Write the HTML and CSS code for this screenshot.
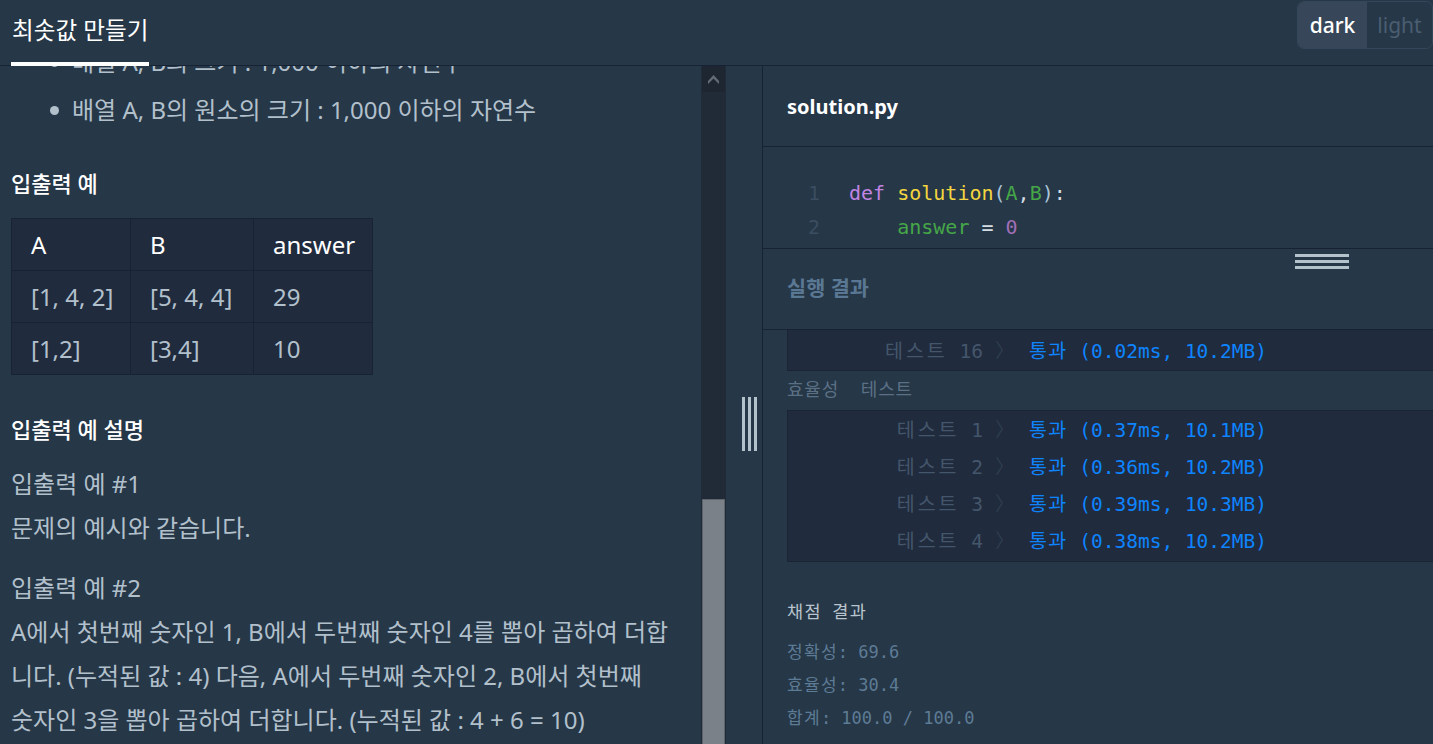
FILE: index.html
```html
<!DOCTYPE html>
<html lang="ko">
<head>
<meta charset="utf-8">
<title>최솟값 만들기</title>
<link rel="stylesheet" href="styles.css">
</head>
<body>
<div class="app">
  <header class="topbar">
    <div class="tab">최솟값 만들기</div>
    <div class="theme-toggle">
      <span class="mode mode-on">dark</span>
      <span class="mode mode-off">light</span>
    </div>
  </header>
  <main class="workspace">
    <section class="problem">
      <div class="problem-view">
        <div class="problem-body">
          <ul class="limits">
            <li>배열 A, B의 크기 : 1,000 이하의 자연수</li>
            <li>배열 A, B의 원소의 크기 : 1,000 이하의 자연수</li>
          </ul>
          <h5 class="sec-title first">입출력 예</h5>
          <table class="io-table">
            <colgroup><col class="c1"><col class="c2"><col class="c3"></colgroup>
            <thead>
              <tr><th>A</th><th>B</th><th>answer</th></tr>
            </thead>
            <tbody>
              <tr><td>[1, 4, 2]</td><td>[5, 4, 4]</td><td>29</td></tr>
              <tr><td>[1,2]</td><td>[3,4]</td><td>10</td></tr>
            </tbody>
          </table>
          <h5 class="sec-title second">입출력 예 설명</h5>
          <p class="para p1">입출력 예 #1<br>문제의 예시와 같습니다.</p>
          <p class="para p2">입출력 예 #2<br>A에서 첫번째 숫자인 1, B에서 두번째 숫자인 4를 뽑아 곱하여 더합<br>니다. (누적된 값 : 4) 다음, A에서 두번째 숫자인 2, B에서 첫번째<br>숫자인 3을 뽑아 곱하여 더합니다. (누적된 값 : 4 + 6 = 10)</p>
        </div>
      </div>
      <div class="scrollbar">
        <div class="sb-btn">
          <svg width="11" height="9" viewBox="0 0 11 9"><polygon points="0,6 5.5,0 11,6 11,9 5.5,3.5 0,9" fill="#646c76"/></svg>
        </div>
        <div class="sb-track"><div class="sb-thumb"></div></div>
      </div>
    </section>
    <div class="splitter">
      <div class="vgrip"><i></i><i></i><i></i></div>
    </div>
    <section class="editor">
      <div class="file-head">solution.py</div>
      <div class="code">
        <div class="code-line"><span class="ln">1</span><code><span class="kw">def</span> <span class="fn">solution</span><span class="pn">(</span><span class="arg">A</span>,<span class="arg">B</span><span class="pn">)</span>:</code></div>
        <div class="code-line"><span class="ln">2</span><code>    <span class="var">answer</span> = <span class="num">0</span></code></div>
      </div>
      <div class="run-head">
        <div class="hgrip"><i></i><i></i><i></i></div>
        <span class="run-title">실행 결과</span>
      </div>
      <div class="output">
        <div class="result-box first">
          <div class="t-row"><span class="t-name"><span class="ko-w">테스트</span> 16</span><span class="t-sep">〉</span><span class="t-res"><span class="ko">통과</span> (0.02ms, 10.2MB)</span></div>
        </div>
        <div class="t-group"><span class="ko">효율성</span>  <span class="ko">테스트</span></div>
        <div class="result-box">
          <div class="t-row"><span class="t-name"><span class="ko-w">테스트</span> 1</span><span class="t-sep">〉</span><span class="t-res"><span class="ko">통과</span> (0.37ms, 10.1MB)</span></div>
          <div class="t-row"><span class="t-name"><span class="ko-w">테스트</span> 2</span><span class="t-sep">〉</span><span class="t-res"><span class="ko">통과</span> (0.36ms, 10.2MB)</span></div>
          <div class="t-row"><span class="t-name"><span class="ko-w">테스트</span> 3</span><span class="t-sep">〉</span><span class="t-res"><span class="ko">통과</span> (0.39ms, 10.3MB)</span></div>
          <div class="t-row"><span class="t-name"><span class="ko-w">테스트</span> 4</span><span class="t-sep">〉</span><span class="t-res"><span class="ko">통과</span> (0.38ms, 10.2MB)</span></div>
        </div>
        <div class="grade">
          <div class="grade-title"><span class="ko">채점</span> <span class="ko">결과</span></div>
          <div class="grade-lines">
            <div class="grade-line"><span class="ko">정확성</span>: 69.6</div>
            <div class="grade-line"><span class="ko">효율성</span>: 30.4</div>
            <div class="grade-line"><span class="ko">합계</span>: 100.0 / 100.0</div>
          </div>
        </div>
      </div>
    </section>
  </main>
</div>
</body>
</html>
```
FILE: styles.css
```css
* { box-sizing: border-box; }
html, body { margin: 0; height: 100%; }
body {
  background: #263747;
  color: #b2c0cc;
  font-family: "Noto Sans", "Noto Sans CJK KR", sans-serif;
  overflow: hidden;
}
.app { width: 1433px; height: 744px; display: flex; flex-direction: column; }

/* top bar */
.topbar {
  height: 66px; flex: none; display: flex; align-items: flex-start;
  box-shadow: inset 0 -1px 0 #172334;
}
.tab {
  margin-left: 11px; height: 66px; padding: 0 1px;
  border-bottom: 4px solid #ffffff;
  color: #ffffff; font-size: 23.6px; line-height: 60px; white-space: nowrap;
}
.theme-toggle {
  margin-left: auto; margin-top: 1px; width: 136px; height: 48px;
  display: flex; border: 1px solid #34465a; border-radius: 7px; overflow: hidden;
  font-size: 21px;
}
.mode { display: flex; align-items: center; justify-content: center; }
.mode-on { width: 69px; background: #374759; color: #ffffff; font-weight: 500; }
.mode-off { flex: 1; color: #4b5e72; }

/* workspace */
.workspace { flex: 1; display: flex; min-height: 0; }
.problem { width: 726px; flex: none; display: flex; }
.problem-view { flex: 1; overflow: hidden; }
.problem-body { margin-top: -26px; padding-left: 11px; font-size: 24px; line-height: 44px; }
.limits { list-style: none; margin: 0; padding: 0 0 0 39px; }
.limits li { display: flex; align-items: center; white-space: nowrap; }
.limits li + li { margin-top: 4px; }
.limits li::before {
  content: ""; width: 9px; height: 9px; border-radius: 50%;
  background: #b2c0cc; margin-right: 13px; flex: none;
}
.sec-title { margin: 0; color: #ffffff; font-size: 22px; font-weight: 500; line-height: 30px; }
.sec-title.first { margin-top: 36px; margin-bottom: 20px; }
.sec-title.second { margin-top: 39px; }
.io-table {
  border-collapse: collapse; background: #202b3d; table-layout: fixed; width: 361px;
}
.io-table .c1 { width: 119px; }
.io-table .c2 { width: 123px; }
.io-table .c3 { width: 119px; }
.io-table th, .io-table td {
  border: 1px solid #172334; height: 52px; padding: 0 0 0 19px;
  text-align: left; font-weight: 400; line-height: 30px; white-space: nowrap;
}
.io-table th { color: #ffffff; }
.para { margin: 0; white-space: nowrap; }
.para.p1 { margin-top: 18px; }
.para.p2 { margin-top: 16px; }

.scrollbar { width: 25px; flex: none; background: #212b37; display: flex; flex-direction: column; padding: 0 1px; }
.sb-btn { height: 26px; background: #1e2731; display: flex; align-items: center; justify-content: center; }
.sb-track { flex: 1; display: flex; flex-direction: column; justify-content: flex-end; }
.sb-thumb { height: 245px; background: #7b8188; border: 1px solid #5d646c; border-bottom: 0; }

.splitter { width: 37px; flex: none; border-right: 1px solid #172334; padding: 331px 0 0 16px; }
.vgrip { display: flex; gap: 3px; height: 54px; }
.vgrip i { width: 3px; background: #b4c2cc; }

/* editor */
.editor { flex: 1; display: flex; flex-direction: column; min-width: 0; }
.file-head {
  height: 81px; flex: none; border-bottom: 1px solid #172334; padding-left: 24px;
  display: flex; align-items: center;
  color: #ffffff; font-size: 20px; font-weight: 700;
}
.code {
  height: 102px; flex: none; border-bottom: 1px solid #172334; padding-top: 29px;
  font-family: "DejaVu Sans Mono", monospace; font-size: 20px; line-height: 34px;
}
.code-line { display: flex; white-space: pre; }
.ln { width: 57px; text-align: right; color: #3b4d61; flex: none; }
.code-line code { font: inherit; margin-left: 29px; color: #d5dde4; }
.kw { color: #c285e3; }
.fn { color: #f3d63f; }
.pn { color: #a9c4d8; }
.arg { color: #45a747; }
.var { color: #45a747; }
.num { color: #a06fb6; }

.run-head {
  height: 81px; flex: none; border-bottom: 1px solid #172334; position: relative;
  padding: 0 0 5px 24px; display: flex; align-items: center;
}
.run-title { color: #5a7894; font-size: 20.8px; font-weight: 700; }
.hgrip { position: absolute; right: 84px; top: 5px; width: 54px; display: flex; flex-direction: column; gap: 3px; }
.hgrip i { height: 3px; background: #b4c2cc; }

.output {
  flex: 1; overflow: hidden; padding-left: 24px;
  font-family: "DejaVu Sans Mono", "Noto Sans CJK KR", monospace;
}
.ko { letter-spacing: 1.3px; }
.ko-w { letter-spacing: 3px; }
.result-box { background: #202b3d; border: 1px solid #1a2432; border-right: 0; padding: 1px 0 1px; }
.result-box.first { border-top: 0; padding-top: 3px; padding-bottom: 0; }
.t-row { display: flex; font-size: 19.5px; line-height: 37px; white-space: pre; }
.t-name { width: 195px; text-align: right; color: #44566b; flex: none; }
.t-sep { width: 46px; padding-left: 12px; color: #2e3d4e; flex: none; }
.t-res { color: #0e84ff; }
.t-group { font-size: 18px; line-height: 36px; color: #5b7085; white-space: pre; margin: 1px 0 2px; }
.t-group .ko { letter-spacing: 0.8px; }
.grade { margin-top: 34px; font-size: 17px; line-height: 33px; }
.grade-title { color: #b8c4ce; font-size: 17.5px; }
.grade-lines { margin-top: 7px; color: #5d7b95; }
```
